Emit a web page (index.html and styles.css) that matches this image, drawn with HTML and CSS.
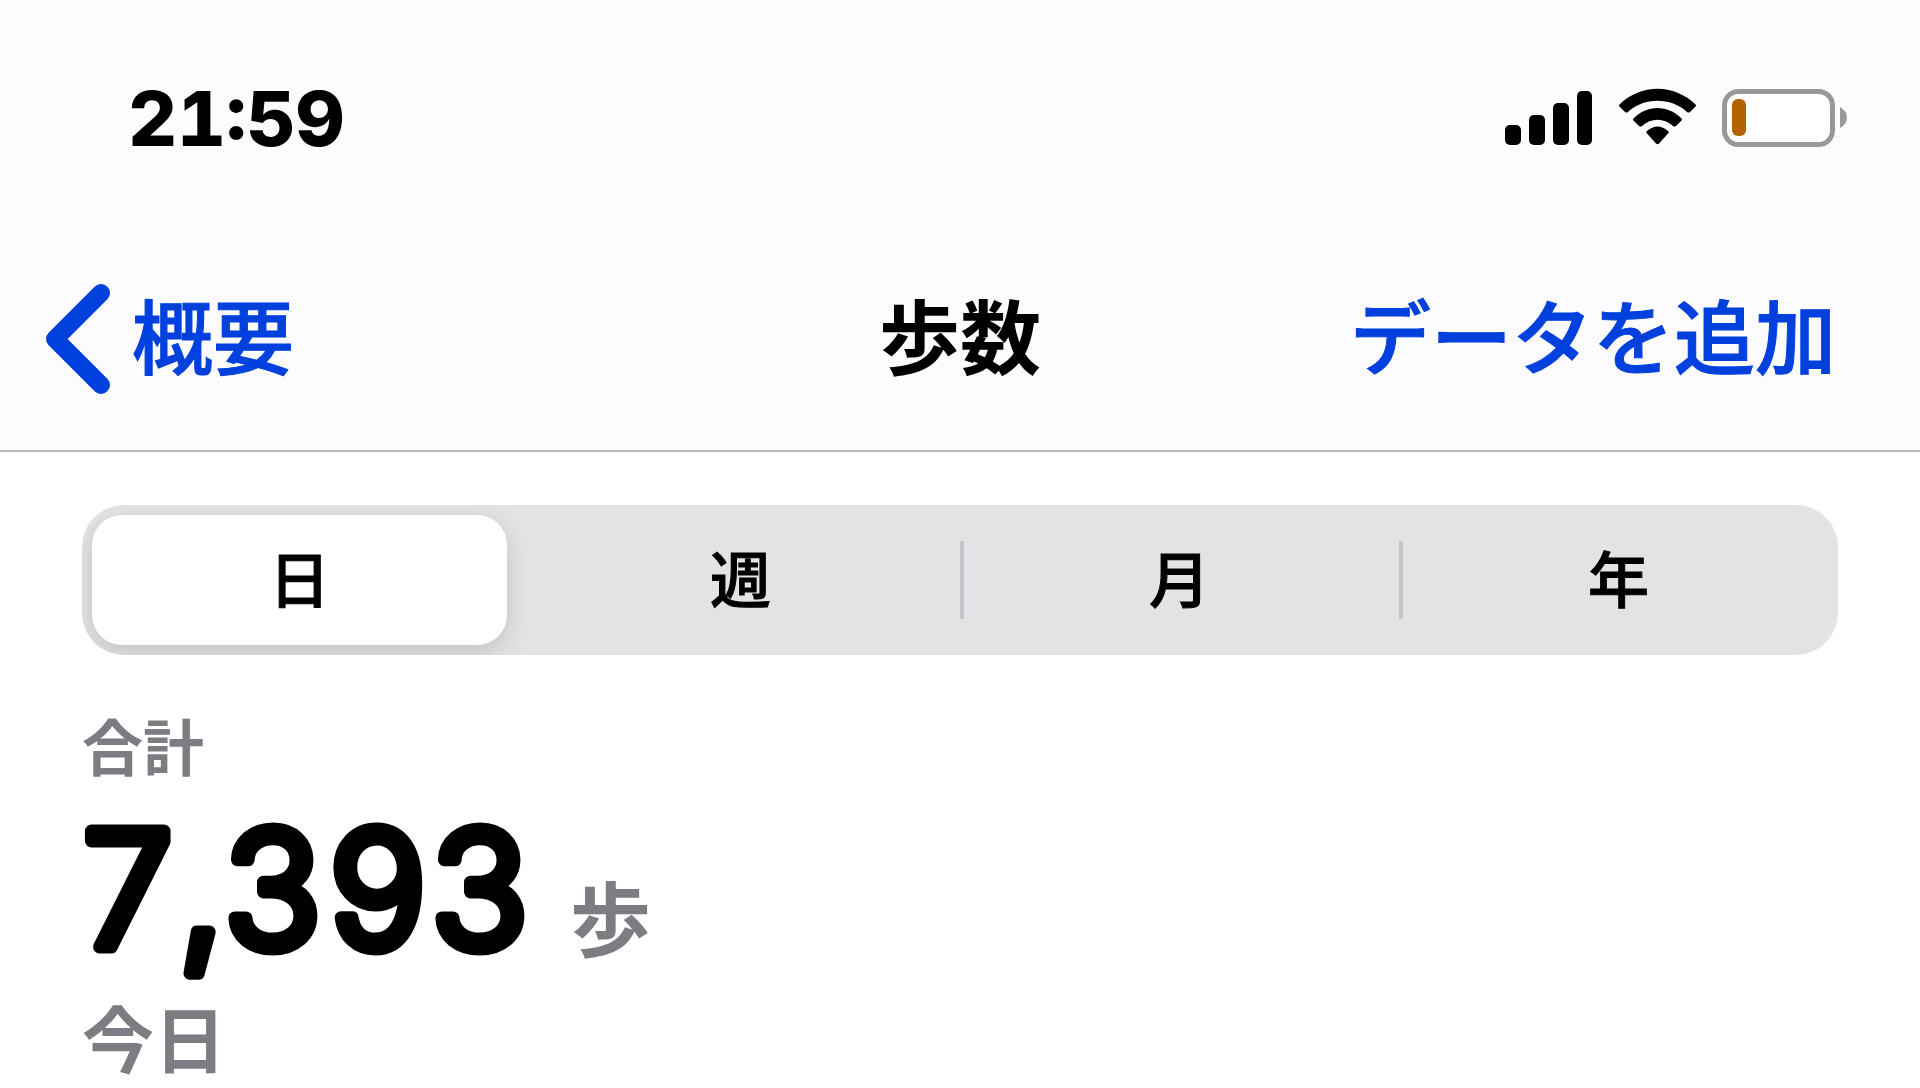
FILE: index.html
```html
<!DOCTYPE html>
<html lang="ja">
<head>
<meta charset="utf-8">
<meta name="viewport" content="width=device-width, initial-scale=1">
<title>歩数</title>
<link rel="stylesheet" href="styles.css">
</head>
<body>
<header class="top">
  <div class="status">
    <time class="clock">21:59</time>
    <svg class="status-icons" width="344" height="60" viewBox="0 0 344 60" aria-hidden="true">
      <rect x="1" y="37" width="16" height="20" rx="5"/>
      <rect x="25" y="27" width="16" height="30" rx="5"/>
      <rect x="49" y="15" width="16" height="42" rx="5"/>
      <rect x="73" y="3" width="15" height="54" rx="5"/>
      <path d="M115.500 16.500C137-4.500 170-4.500 191.500 16.500Q192.500 17.500 191.500 18.500L186 24Q184.500 25 183 24C167 9 140 9 124 24Q122.500 25 121 24L115.500 18.500Q114.500 17.500 115.500 16.500ZM129.500 30.500C143 16.500 164 16.500 177.500 30.500Q178.500 31.500 177.500 32.500L172 38Q170.500 39 169 38C160 29.500 147 29.500 138 38Q136.500 39 135 38L129.500 32.500Q128.500 31.500 129.500 30.500ZM143 43Q153.500 34 164 43Q165.500 44 164 45.500L155 55.500Q153.500 57 152 55.500L143 45.500Q141.500 44 143 43Z"/>
      <rect class="battery-case" x="220.500" y="3.500" width="108" height="53" rx="14"/>
      <rect class="battery-level" x="228" y="11" width="14" height="37" rx="6"/>
      <path class="battery-tip" d="M336 19Q343 23 343 29.500Q343 36 336 40Z"/>
    </svg>
  </div>
  <nav class="nav">
    <a class="back" href="#"><svg class="chevron" width="68" height="112" viewBox="0 0 68 112" aria-hidden="true"><path d="M57 10 11 56l46 46"/></svg>概要</a>
    <h1 class="title">歩数</h1>
    <a class="add" href="#">データを追加</a>
  </nav>
</header>
<main class="content">
  <div class="segments">
    <button class="segment selected" type="button" aria-pressed="true">日</button>
    <button class="segment" type="button" aria-pressed="false">週</button>
    <button class="segment divided" type="button" aria-pressed="false">月</button>
    <button class="segment divided" type="button" aria-pressed="false">年</button>
  </div>
  <section class="summary">
    <p class="label">合計</p>
    <p class="total">
      <svg class="count" width="488" height="176" viewBox="0 0 488 176"><text x="-6" y="154">7,393</text></svg>
      <span class="unit">歩</span>
    </p>
    <p class="period">今日</p>
  </section>
</main>
</body>
</html>
```
FILE: styles.css
```css
* { box-sizing: border-box; }
body {
  margin: 0;
  background: #fff;
  color: #000;
  font-family: Inter, "Noto Sans CJK JP", sans-serif;
}
h1, p { margin: 0; }
a { color: #0040dd; text-decoration: none; }
.top {
  background: #fcfcff;
  border-bottom: 2px solid #b9b9bc;
}
.status {
  display: flex;
  justify-content: space-between;
  align-items: center;
  height: 236px;
  padding: 0 72px 0 128px;
}
.clock {
  font-size: 76px;
  font-weight: 800;
  line-height: 80px;
  font-variation-settings: "opsz" 14;
  font-feature-settings: "tnum";
}
.battery-case { fill: #fff; stroke: #98989a; stroke-width: 5px; }
.battery-level { fill: #b26200; }
.battery-tip { fill: #98989a; }
.nav {
  display: grid;
  grid-template-columns: 1fr auto 1fr;
  align-items: center;
  height: 214px;
  padding: 0 44px 8px;
  font-size: 81px;
  line-height: 120px;
  font-weight: 500;
}
.back { display: flex; align-items: center; gap: 20px; }
.back, .add { -webkit-text-stroke: 1px #0040dd; }
.chevron { fill: none; stroke: #0040dd; stroke-width: 18px; stroke-linecap: round; stroke-linejoin: round; }
.title { font-size: 81px; font-weight: 700; }
.add { justify-self: end; margin-right: 40px; }
.content { padding: 53px 82px 0; }
.segments {
  display: grid;
  grid-template-columns: repeat(4, 1fr);
  height: 150px;
  border-radius: 42px;
  background: #e3e3e5;
  overflow: hidden;
}
.segment {
  display: flex;
  align-items: center;
  justify-content: center;
  padding: 0 0 6px;
  border: 0;
  background: none;
  color: #000;
  font: 500 61px/88px "Noto Sans CJK JP", sans-serif;
  -webkit-text-stroke: 1px #000;
}
.selected {
  margin: 10px 14px 10px 10px;
  border-radius: 30px;
  background: #fff;
  box-shadow: 0 8px 24px rgba(0, 0, 0, .14);
}
.divided {
  background: linear-gradient(#c5c5c9, #c5c5c9) left center / 4px 78px no-repeat;
}
.summary { color: #7c7c82; font-weight: 700; }
.label { margin-top: 50px; font-size: 61px; line-height: 88px; }
.total { display: flex; height: 198px; }
.count {
  overflow: visible;
  fill: #000;
  stroke: #000;
  stroke-width: 13px;
  stroke-linejoin: round;
  font-size: 160px;
  font-weight: 300;
  font-variation-settings: "opsz" 14;
  font-feature-settings: "tnum";
}
.unit { padding-top: 68px; font-size: 81px; line-height: 120px; }
.period { font-size: 72px; line-height: 100px; }
```
